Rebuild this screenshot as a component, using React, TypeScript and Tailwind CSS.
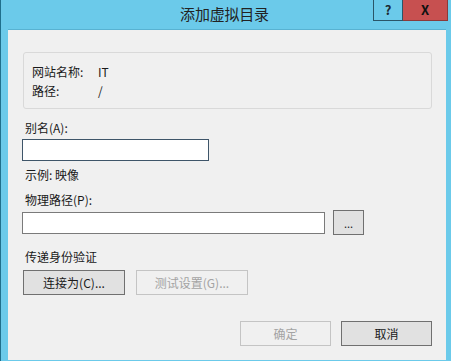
import React from "react";

const font = { fontFamily: '"Noto Sans CJK SC", "Microsoft YaHei", sans-serif' };

export default function App() {
  return (
    <div
      className="w-[451px] h-[361px] bg-[#6bcaea] border-l border-l-[#1f6f8c] flex flex-col text-[12px] leading-[16px] text-[#1a1a1a]"
      style={font}
    >
      {/* Title bar */}
      <div className="h-[29px] flex items-start shrink-0">
        <div className="flex-1" />
        <div className="text-[15px] leading-[20px] mt-[4px] text-[#222] tracking-[-0.2px]">添加虚拟目录</div>
        <div className="flex-1 flex justify-end pr-[3px]">
          <div className="w-[30px] h-[21px] border-x border-b border-[#2a5568] flex items-center justify-center font-bold text-[13px] text-[#1a2a33]">
            ?
          </div>
          <div className="w-[45px] h-[21px] bg-[#c75050] border-b border-r border-[#8b3a3a] flex items-center justify-center font-bold text-[13px] text-[#111]">
            X
          </div>
        </div>
      </div>
      {/* Client area */}
      <div className="flex-1 ml-[7px] mr-[5px] mb-[1px] bg-[#f0f0f0] border-t border-t-[#58b2d2] flex flex-col">
        <div className="mt-[22px] ml-[15px] mr-[14px] h-[57px] border border-[#d9d9d9] rounded-[3px] pl-[8px] pt-[9px] flex flex-col">
          <div className="flex h-[19px] items-center">
            <span className="w-[66px]">网站名称:</span>
            <span>IT</span>
          </div>
          <div className="flex h-[19px] items-center">
            <span className="w-[66px]">路径:</span>
            <span>/</span>
          </div>
        </div>

        <div className="mt-[11px] ml-[17px]">别名(A):</div>
        <div className="mt-[3px] ml-[14px] w-[187px] h-[22px] bg-white border border-[#3e5569]" />
        <div className="mt-[6px] ml-[17px]">示例: 映像</div>
        <div className="mt-[9px] ml-[17px]">物理路径(P):</div>
        <div className="mt-[2px] ml-[14px] flex items-center gap-[8px] h-[25px]">
          <div className="w-[303px] h-[22px] bg-white border border-[#7a7a7a]" />
          <div className="w-[31px] h-[25px] bg-[#e1e1e1] border border-[#707070] flex items-center justify-center text-[11px] leading-[11px] pt-[2px]">
            ...
          </div>
        </div>

        <div className="mt-[14px] ml-[17px]">传递身份验证</div>
        <div className="mt-[5px] ml-[15px] flex gap-[11px]">
          <div className="w-[102px] h-[25px] bg-[#e1e1e1] border border-[#707070] flex items-center justify-center">
            连接为(C)...
          </div>
          <div className="w-[112px] h-[25px] bg-[#f0f0f0] border border-[#c4c4c4] flex items-center justify-center text-[#a3a3a3]">
            测试设置(G)...
          </div>
        </div>

        <div className="mt-[26px] mr-[14px] flex justify-end gap-[10px]">
          <div className="w-[91px] h-[25px] bg-[#f0f0f0] border border-[#c4c4c4] flex items-center justify-center text-[#a3a3a3]">
            确定
          </div>
          <div className="w-[91px] h-[25px] bg-[#e1e1e1] border border-[#707070] flex items-center justify-center">
            取消
          </div>
        </div>
      </div>
    </div>
  );
}
